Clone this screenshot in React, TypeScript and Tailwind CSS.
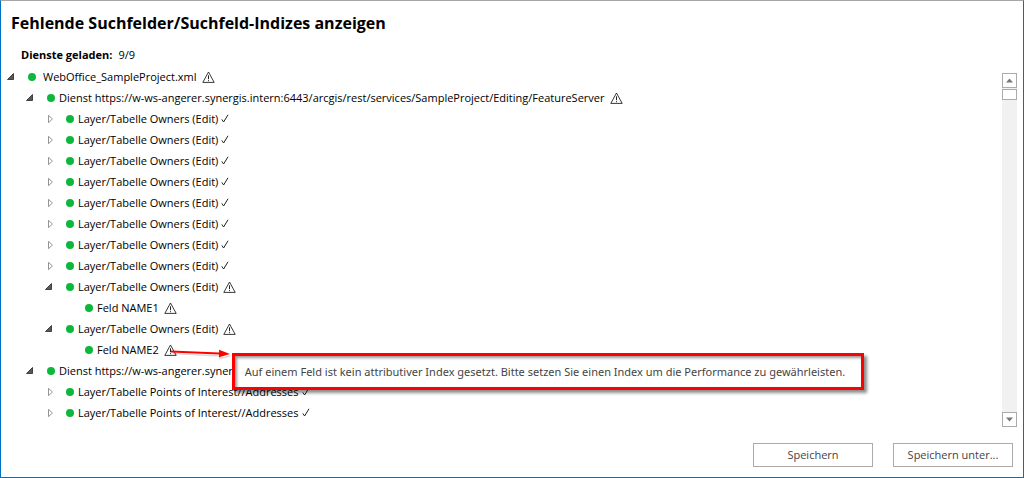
import { useState } from 'react';

type Status = 'warning' | 'ok' | 'none';

interface TreeNode {
  id: string;
  label: string;
  status: Status;
  open?: boolean;
  hint?: string;
  children?: TreeNode[];
}

const INDEX_HINT =
  'Auf einem Feld ist kein attributiver Index gesetzt. Bitte setzen Sie einen Index um die Performance zu gewährleisten.';

const OWNERS = 'Layer/Tabelle Owners (Edit)';
const ADDRESSES = 'Layer/Tabelle Points of Interest//Addresses';

const TREE: TreeNode = {
  id: 'project',
  label: 'WebOffice_SampleProject.xml',
  status: 'warning',
  open: true,
  children: [
    {
      id: 'editing',
      label: 'Dienst https://w-ws-angerer.synergis.intern:6443/arcgis/rest/services/SampleProject/Editing/FeatureServer',
      status: 'warning',
      open: true,
      children: [
        { id: 'owners-1', label: OWNERS, status: 'ok', children: [] },
        { id: 'owners-2', label: OWNERS, status: 'ok', children: [] },
        { id: 'owners-3', label: OWNERS, status: 'ok', children: [] },
        { id: 'owners-4', label: OWNERS, status: 'ok', children: [] },
        { id: 'owners-5', label: OWNERS, status: 'ok', children: [] },
        { id: 'owners-6', label: OWNERS, status: 'ok', children: [] },
        { id: 'owners-7', label: OWNERS, status: 'ok', children: [] },
        { id: 'owners-8', label: OWNERS, status: 'ok', children: [] },
        {
          id: 'owners-9',
          label: OWNERS,
          status: 'warning',
          open: true,
          children: [{ id: 'name1', label: 'Feld NAME1', status: 'warning' }],
        },
        {
          id: 'owners-10',
          label: OWNERS,
          status: 'warning',
          open: true,
          children: [{ id: 'name2', label: 'Feld NAME2', status: 'warning', hint: INDEX_HINT }],
        },
      ],
    },
    {
      id: 'poi',
      label: 'Dienst https://w-ws-angerer.synergis',
      status: 'none',
      open: true,
      children: [
        { id: 'addresses-1', label: ADDRESSES, status: 'ok', children: [] },
        { id: 'addresses-2', label: ADDRESSES, status: 'ok', children: [] },
      ],
    },
  ],
};

function WarningIcon() {
  return (
    <svg width="13" height="12" viewBox="0 0 13 12" fill="none" stroke="#222" aria-hidden="true">
      <path d="M6.5 1 L12.2 11.4 H0.8 Z" strokeWidth="0.9" />
      <path d="M6.5 4.3 V8.2 M6.5 9.2 V10.2" strokeWidth="1" />
    </svg>
  );
}

function CheckIcon() {
  return (
    <svg width="8" height="9" viewBox="0 0 8 9" fill="none" stroke="#222" aria-hidden="true">
      <path d="M0.8 5.4 L2.6 8 L7 0.8" strokeWidth="1" />
    </svg>
  );
}

function ToggleIcon({ open }: { open: boolean }) {
  return (
    <svg width="8" height="8" viewBox="0 0 8 8" aria-hidden="true">
      {open ? (
        <path d="M6.5 0.5 V6.5 H0.5 Z" fill="#595959" stroke="#262626" strokeWidth="0.8" />
      ) : (
        <path d="M3.5 0.3 L7.4 4 L3.5 7.7 Z" fill="#fff" stroke="#888" strokeWidth="0.9" />
      )}
    </svg>
  );
}

function Hint({ text }: { text: string }) {
  return (
    <>
      <svg className="absolute left-1 top-0 z-20" width="66" height="16" viewBox="0 0 66 16" aria-hidden="true">
        <path d="M5 9.5 L52 12 L52 14.5 L62 12" fill="none" stroke="#000" strokeOpacity="0.15" strokeWidth="1.6" />
        <path d="M3 7.5 L51 9.5" stroke="#f00" strokeWidth="2" />
        <path d="M51 5.8 L62 10 L51 13.2 Z" fill="#f00" />
      </svg>
      <div
        role="tooltip"
        className="absolute left-[68px] top-[9px] z-10 border-3 border-[#f00] bg-white py-2 pr-4 pl-[10px] font-['Noto_Sans',sans-serif] leading-[15px] whitespace-nowrap text-[#444] shadow-[3px_3px_3px_rgba(0,0,0,0.45),inset_2px_2px_3px_rgba(0,0,0,0.4)]"
      >
        {text}
      </div>
    </>
  );
}

function TreeItem({ node, root = false }: { node: TreeNode; root?: boolean }) {
  const [open, setOpen] = useState(!!node.open);

  return (
    <li>
      <div className="flex h-[21px] items-center">
        {node.children ? (
          <button aria-label={node.label} aria-expanded={open} onClick={() => setOpen(!open)} className="mr-[13px] w-2">
            <ToggleIcon open={open} />
          </button>
        ) : (
          <span className="mr-[13px] w-2" />
        )}
        <span className={`size-2 shrink-0 rounded-full bg-[#0cb83c] ${root ? 'mr-[7px]' : 'mr-1'}`} />
        <span className="whitespace-nowrap">{node.label}</span>
        {node.status === 'warning' && (
          <span className="relative ml-[5px]">
            <WarningIcon />
            {node.hint && <Hint text={node.hint} />}
          </span>
        )}
        {node.status === 'ok' && (
          <span className="ml-[3px]">
            <CheckIcon />
          </span>
        )}
      </div>
      {open && node.children && (
        <ul className="pl-[19px]">
          {node.children.map(child => (
            <TreeItem key={child.id} node={child} />
          ))}
        </ul>
      )}
    </li>
  );
}

function ScrollBar() {
  return (
    <div className="mt-[7px] flex w-[15px] shrink-0 flex-col bg-[#f1f1f1]">
      <button aria-label="Nach oben" className="flex h-[15px] items-center justify-center border border-[#ababab] bg-white">
        <svg width="7" height="5" viewBox="0 0 7 5" aria-hidden="true">
          <path d="M3.5 0.5 L7 4.5 H0 Z" fill="#777" />
        </svg>
      </button>
      <div className="mt-px h-[11px] border border-[#ababab] bg-white" />
      <button
        aria-label="Nach unten"
        className="mt-auto flex h-[15px] items-center justify-center border border-[#ababab] bg-white"
      >
        <svg width="7" height="5" viewBox="0 0 7 5" aria-hidden="true">
          <path d="M0 0.5 H7 L3.5 4.5 Z" fill="#777" />
        </svg>
      </button>
    </div>
  );
}

export default function App() {
  return (
    <div className="flex min-h-screen flex-col border border-[#0072c6] border-t-[#a6a6a6] bg-white font-['Open_Sans','Noto_Sans',sans-serif] text-[11px] leading-4 text-black">
      {/* Titel */}
      <h1 className="px-[10px] pt-[10px] text-base leading-6 font-bold">Fehlende Suchfelder/Suchfeld-Indizes anzeigen</h1>
      <p className="px-5 pt-3 pb-[3px]">
        <span className="mr-[6px] font-bold">Dienste geladen:</span>
        <span>9/9</span>
      </p>

      {/* Baum */}
      <div className="flex flex-1 pr-[6px] pl-[6px]">
        <ul className="min-w-0 flex-1">
          <TreeItem node={TREE} root />
        </ul>
        <ScrollBar />
      </div>

      {/* Aktionen */}
      <div className="flex justify-end gap-5 px-[10px] pt-4 pb-[10px] text-[#444]">
        <button className="h-6 w-[120px] border border-[#ababab] bg-white">Speichern</button>
        <button className="h-6 w-[120px] border border-[#ababab] bg-white">Speichern unter...</button>
      </div>
    </div>
  );
}
